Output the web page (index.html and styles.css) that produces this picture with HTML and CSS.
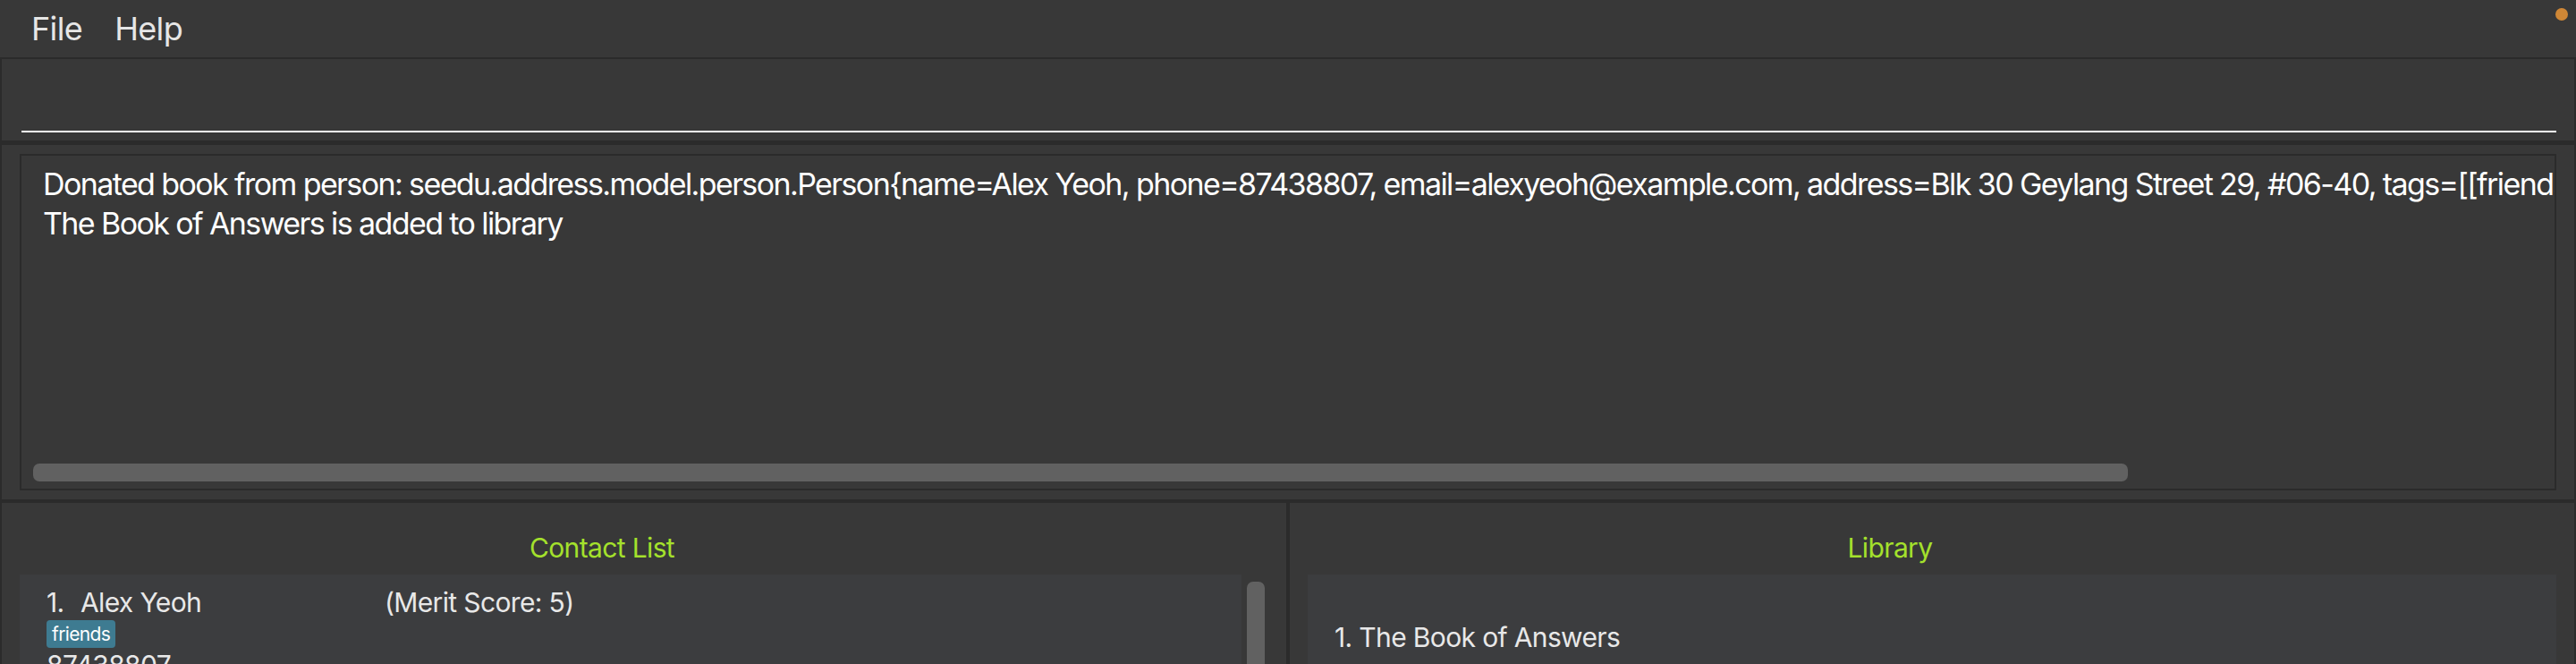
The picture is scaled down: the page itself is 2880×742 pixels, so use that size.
FILE: index.html
```html
<!DOCTYPE html>
<html lang="en">
<head>
<meta charset="utf-8">
<title>Address Book</title>
<link rel="stylesheet" href="styles.css">
</head>
<body>
<div class="menubar">
  <span class="menu-item">File</span>
  <span class="menu-item">Help</span>
  <span class="dot"></span>
</div>
<div class="main">
  <div class="cmd-panel"><div class="cmd-field"></div></div>
  <div class="result-panel">
    <div class="result-box">
      <div class="result-text">Donated book from person: seedu.address.model.person.Person{name=Alex Yeoh, phone=87438807, email=alexyeoh@example.com, address=Blk 30 Geylang Street 29, #06-40, tags=[[friends]]}
The Book of Answers is added to library</div>
      <div class="hscroll"><div class="hthumb"></div></div>
    </div>
  </div>
  <div class="split">
    <div class="pane">
      <div class="pane-title">Contact List</div>
      <div class="list-wrap">
        <div class="list">
          <div class="card">
            <div class="card-row">
              <span class="idx">1.</span>
              <span class="name">Alex Yeoh</span>
              <span class="merit">(Merit Score: 5)</span>
            </div>
            <div class="tags"><span class="tag">friends</span></div>
            <div class="field">87438807</div>
          </div>
        </div>
        <div class="vscroll"><div class="vthumb"></div></div>
      </div>
    </div>
    <div class="pane">
      <div class="pane-title">Library</div>
      <div class="list-wrap">
        <div class="list">
          <div class="book">1. The Book of Answers</div>
        </div>
      </div>
    </div>
  </div>
</div>
</body>
</html>
```

FILE: styles.css
```css
html, body {
  margin: 0;
  padding: 0;
}
body {
  width: 2880px;
  height: 742px;
  overflow: hidden;
  background: #2b2b2b;
  font-family: Inter, "Noto Sans", sans-serif;
  letter-spacing: -0.04em;
}

.menubar {
  height: 64px;
  background: #383838;
  display: flex;
  align-items: flex-start;
  padding-left: 35px;
}
.menu-item {
  font-size: 36px;
  line-height: 64px;
  color: #e6e6e6;
  margin-right: 36px;
}
.dot {
  margin-left: auto;
  margin-right: 9px;
  margin-top: 9px;
  width: 14px;
  height: 14px;
  border-radius: 50%;
  background: #cf8736;
}

.main {
  padding: 2px 2px 0 2px;
  display: flex;
  flex-direction: column;
}

.cmd-panel {
  height: 91px;
  box-sizing: border-box;
  background: #383838;
  padding: 0 20px 9px 22px;
  display: flex;
  align-items: flex-end;
}
.cmd-field {
  flex: 1;
  height: 40px;
  border-bottom: 2px solid #ffffff;
}

.result-panel {
  margin-top: 5px;
  height: 396px;
  box-sizing: border-box;
  background: #383838;
  padding: 10px 20px;
}
.result-box {
  height: 100%;
  box-sizing: border-box;
  border: 2px solid #2b2b2b;
  display: flex;
  flex-direction: column;
  overflow: hidden;
}
.result-text {
  flex: 1;
  white-space: pre;
  overflow: hidden;
  color: #ffffff;
  font-size: 34px;
  line-height: 44px;
  letter-spacing: -1.6px;
  padding: 10px 0 0 24px;
}
.hscroll {
  height: 20px;
  margin: 0 0 8px 13px;
}
.hthumb {
  width: 2342px;
  height: 20px;
  border-radius: 7px;
  background: #616161;
}

.split {
  margin-top: 4px;
  height: 180px;
  display: flex;
  gap: 4px;
}
.pane {
  flex: 1;
  background: #383838;
  padding: 0 20px;
  display: flex;
  flex-direction: column;
}
.pane-title {
  padding: 30px 94px 0 0;
  margin-bottom: 10px;
  text-align: center;
  font-size: 30px;
  line-height: 40px;
  color: #a4e12c;
}
.list-wrap {
  flex: 1;
  display: flex;
}
.list {
  flex: 1;
  background: #3c3d3f;
}
.vscroll {
  width: 30px;
}
.vthumb {
  margin: 8px 0 0 6px;
  width: 20px;
  height: 200px;
  border-radius: 7px;
  background: #616161;
}

.card {
  padding: 11px 0 0 30px;
  color: #e8e8e8;
}
.card-row {
  display: flex;
  font-size: 30px;
  line-height: 40px;
}
.idx {
  width: 38px;
}
.name {
  width: 340px;
}
.tags {
  display: flex;
}
.tag {
  background: #3e7b91;
  color: #ffffff;
  font-size: 21px;
  line-height: 31px;
  padding: 0 6px;
  border-radius: 4px;
  letter-spacing: -0.03em;
}
.field {
  font-size: 30px;
  line-height: 40px;
  margin-top: -1px;
}

.book {
  padding: 50px 0 0 30px;
  font-size: 30px;
  line-height: 40px;
  color: #e8e8e8;
}
```
